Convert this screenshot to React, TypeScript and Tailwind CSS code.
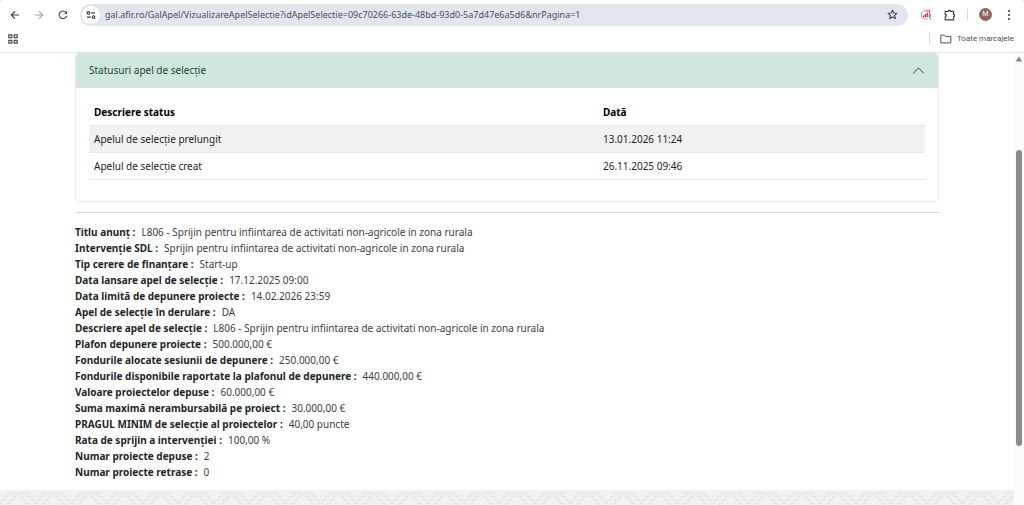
import { useState } from "react";

const statuses = [
  { name: "Apelul de selecție prelungit", date: "13.01.2026 11:24" },
  { name: "Apelul de selecție creat", date: "26.11.2025 09:46" },
];

const details = [
  { label: "Titlu anunț :", value: "L806 - Sprijin pentru infiintarea de activitati non-agricole in zona rurala" },
  { label: "Intervenție SDL :", value: "Sprijin pentru infiintarea de activitati non-agricole in zona rurala" },
  { label: "Tip cerere de finanțare :", value: "Start-up" },
  { label: "Data lansare apel de selecție :", value: "17.12.2025 09:00" },
  { label: "Data limită de depunere proiecte :", value: "14.02.2026 23:59" },
  { label: "Apel de selecție în derulare :", value: "DA" },
  { label: "Descriere apel de selecție :", value: "L806 - Sprijin pentru infiintarea de activitati non-agricole in zona rurala" },
  { label: "Plafon depunere proiecte :", value: "500.000,00 €" },
  { label: "Fondurile alocate sesiunii de depunere :", value: "250.000,00 €" },
  { label: "Fondurile disponibile raportate la plafonul de depunere :", value: "440.000,00 €" },
  { label: "Valoare proiectelor depuse :", value: "60.000,00 €" },
  { label: "Suma maximă nerambursabilă pe proiect :", value: "30.000,00 €" },
  { label: "PRAGUL MINIM de selecție al proiectelor :", value: "40,00 puncte" },
  { label: "Rata de sprijin a intervenției :", value: "100,00 %" },
  { label: "Numar proiecte depuse :", value: "2" },
  { label: "Numar proiecte retrase :", value: "0" },
];

const BrowserBar = () => {
  const [url, setUrl] = useState(
    "gal.afir.ro/GalApel/VizualizareApelSelectie?idApelSelectie=09c70266-63de-48bd-93d0-5a7d47e6a5d6&nrPagina=1"
  );

  return (
    <header className="bg-[#d3e3fd]">
      <div className="rounded-t-[4px] border-b border-[#e4e5e7] bg-white">
        <div className="flex h-[29px] items-center pr-[10px] pl-2">
          <button aria-label="Înapoi" className="flex w-[14px] justify-center">
            <svg width="10" height="10" viewBox="0 0 10 10" fill="none" stroke="#3c4043" strokeWidth="1.2">
              <path d="M9 5H1.5M5 1.3L1.3 5L5 8.7" />
            </svg>
          </button>
          <button aria-label="Înainte" className="ml-[10px] flex w-[14px] justify-center">
            <svg width="10" height="10" viewBox="0 0 10 10" fill="none" stroke="#a3a5a8" strokeWidth="1.1">
              <path d="M1 5h7.5M5 1.3L8.7 5L5 8.7" />
            </svg>
          </button>
          <button aria-label="Reîncarcă" className="ml-[10px] flex w-[14px] justify-center">
            <svg width="10" height="10" viewBox="0 0 10 10" fill="none" stroke="#3c4043" strokeWidth="1.1">
              <path d="M8.6 5.8A3.8 3.8 0 1 1 7.8 2.4L8.8 3.4" />
              <path d="M9 .9v2.9H6.1z" fill="#3c4043" stroke="none" />
            </svg>
          </button>
          <div className="ml-[10px] flex h-[22px] min-w-0 flex-1 items-center rounded-full bg-[#e1e5ee] pr-[10px] pl-[2px]">
            <button aria-label="Informații despre site" className="flex size-[18px] shrink-0 items-center justify-center rounded-full bg-white">
              <svg width="10" height="10" viewBox="0 0 10 10" fill="none" stroke="#3c4043" strokeWidth="1.1">
                <circle cx="2.4" cy="2.9" r="1.3" />
                <path d="M5.2 2.9H9M1 7.1h3.8" />
                <circle cx="7.6" cy="7.1" r="1.3" />
              </svg>
            </button>
            <input
              aria-label="Adresă"
              value={url}
              onChange={(e) => setUrl(e.target.value)}
              className="ml-[5px] h-[18px] min-w-0 flex-1 bg-transparent text-[9px] text-[#4c4f54] outline-none"
            />
            <button aria-label="Adaugă la marcaje">
              <svg width="11" height="11" viewBox="0 0 11 11" fill="none" stroke="#3c4043" strokeWidth="1.1" strokeLinejoin="round">
                <path d="M5.5 1.1l1.3 2.9 3.1.3-2.3 2.1.7 3.1-2.8-1.6-2.8 1.6.7-3.1L1.1 4.3l3.1-.3z" />
              </svg>
            </button>
          </div>
          <button aria-label="Extensie" className="ml-3">
            <svg width="12" height="12" viewBox="0 0 12 12" fill="none">
              <path d="M7.4 10A4.6 4.6 0 1 1 7.6 1.4" stroke="#a9a0a0" strokeWidth="1" />
              <path d="M10.4 5.4c0 1.3-.3 2.4-1 3.3l1.9 2.1" stroke="#77706f" strokeWidth="1" />
              <path d="M3.4 8.3V6.4M5.3 8.3V5M7.2 8.3V3.6" stroke="#b3303c" strokeWidth="1.3" />
              <path d="M6.2 2.2L10 1.3 9.2 5v3" stroke="#d8505a" strokeWidth="1" />
            </svg>
          </button>
          <button aria-label="Extensii" className="ml-[12px]">
            <svg width="12" height="12" viewBox="0 0 12 12" fill="none" stroke="#3c4043" strokeWidth="1.2" strokeLinejoin="round">
              <path d="M1.2 2.4h3c.2-1.3 2.2-1.3 2.4 0h3v3c1.3.2 1.3 2.2 0 2.4v3H1.2v-3c1.6-.2 1.6-2.2 0-2.4z" />
            </svg>
          </button>
          <span className="ml-[11px] h-[11px] w-px bg-[#c9daf6]" />
          <button aria-label="Profil" className="ml-[11px] flex size-[13px] items-center justify-center rounded-full bg-[#8a6a5e] text-[7px] text-white">
            M
          </button>
          <button aria-label="Meniu" className="ml-[12px] flex w-[10px] justify-center">
            <svg width="4" height="12" viewBox="0 0 4 12" fill="#3c4043">
              <circle cx="2" cy="2" r="1.1" />
              <circle cx="2" cy="6" r="1.1" />
              <circle cx="2" cy="10" r="1.1" />
            </svg>
          </button>
        </div>
        <div className="flex h-[23px] items-center justify-between pr-[10px] pb-[4px] pl-2">
          <button aria-label="Aplicații">
            <svg width="10" height="10" viewBox="0 0 10 10" fill="none" stroke="#4a4d51" strokeWidth="1.2">
              <path d="M.8.9h3v2.8h-3zM6.2.9h3v2.8h-3zM.8 6.3h3v2.8h-3zM6.2 6.3h3v2.8h-3z" />
            </svg>
          </button>
          <div className="flex items-center">
            <span className="h-[11px] w-px bg-[#c9daf6]" />
            <button className="ml-[10px] flex items-center gap-[5px] font-['Roboto',sans-serif] text-[8px] text-[#4c4f54]">
              <svg width="12" height="10" viewBox="0 0 12 10" fill="none" stroke="#4a4d51" strokeWidth="1" strokeLinejoin="round">
                <path d="M.8 8.9V1.1h3.6l1.2 1.3h5.2v6.5z" />
              </svg>
              Toate marcajele
            </button>
          </div>
        </div>
      </div>
    </header>
  );
};

const StatusPanel = () => {
  const [open, setOpen] = useState(true);

  return (
    <section className="rounded-[5px] border border-t-0 border-[#e9ebec]">
      <h2>
        <button
          aria-expanded={open}
          onClick={() => setOpen(!open)}
          className="flex h-[35px] w-full items-center justify-between rounded-t-[4px] border-b border-[#dde5e2] bg-[#d1e7dd] px-[13px] text-[10px] text-[#17472f]"
        >
          Statusuri apel de selecție
          <svg width="13" height="13" viewBox="0 0 13 13" fill="none" stroke="#1d4d36" strokeWidth="1" strokeLinecap="round">
            <path d="M1.5 9l5-5 5 5" />
          </svg>
        </button>
      </h2>
      {open && (
        <div className="px-[13px] pt-[11px] pb-[21px]">
          <table className="w-full table-fixed text-left text-[10px] leading-4 text-[#212529]">
            <thead>
              <tr className="border-b border-[#e4e6e9] text-black">
                <th className="w-[61%] px-[5px] py-[5px] font-bold">Descriere status</th>
                <th className="px-[4px] py-[5px] font-bold">Dată</th>
              </tr>
            </thead>
            <tbody>
              {statuses.map((status) => (
                <tr key={status.name} className="border-b border-[#e8e9eb] odd:bg-[#f1f1f1]">
                  <td className="px-[5px] py-[5px]">{status.name}</td>
                  <td className="px-[4px] py-[5px]">{status.date}</td>
                </tr>
              ))}
            </tbody>
          </table>
        </div>
      )}
    </section>
  );
};

const Footer = () => (
  <footer className="mt-[10px] min-h-[14px] flex-1 overflow-hidden bg-[#f0f2f1]">
    <svg className="block w-full" height="15">
      <defs>
        <pattern id="steps" width="35.65" height="40" patternUnits="userSpaceOnUse">
          <g fill="none" stroke="#e1e4e3" strokeWidth="1.2">
            <path d="M-2 17V13.4H1.4V10H4.6V6.6H7.8V3.2H16V6.6H12.8V10H9.6V13.4H6.4V17" />
            <path d="M37.5 17V13.4H34.1V10H30.9V6.6H27.7V3.2H19.2V6.6H22.6V10H25.8V13.4H29V17" />
          </g>
        </pattern>
      </defs>
      <rect width="100%" height="15" fill="url(#steps)" />
    </svg>
  </footer>
);

const App = () => {
  return (
    <div className="flex min-h-screen flex-col bg-white font-['Noto_Sans',sans-serif]">
      <BrowserBar />
      <div className="flex flex-1">
        <main className="flex min-w-0 flex-1 flex-col">
          <div className="mx-auto w-full max-w-[864px]">
            <StatusPanel />
            <hr className="mt-[10px] border-[#d9dadb]" />
            <dl className="mt-[11px] text-[10px] leading-4">
              {details.map((item) => (
                <div key={item.label} className="flex gap-[6px]">
                  <dt className="font-bold text-[#212529]">{item.label}</dt>
                  <dd className="text-[#3c4044]">{item.value}</dd>
                </div>
              ))}
            </dl>
          </div>
          <Footer />
        </main>
        <div className="flex w-[10px] shrink-0 flex-col items-center bg-[#fbfbfb]">
          <svg className="mt-[3px]" width="8" height="6" viewBox="0 0 8 6" fill="#858585">
            <path d="M4 .5L7.3 5.5H.7z" />
          </svg>
          <div className="mt-[88px] h-[296px] w-[6px] rounded-full bg-[#8b8b8b]" />
        </div>
      </div>
    </div>
  );
};

export default App;
